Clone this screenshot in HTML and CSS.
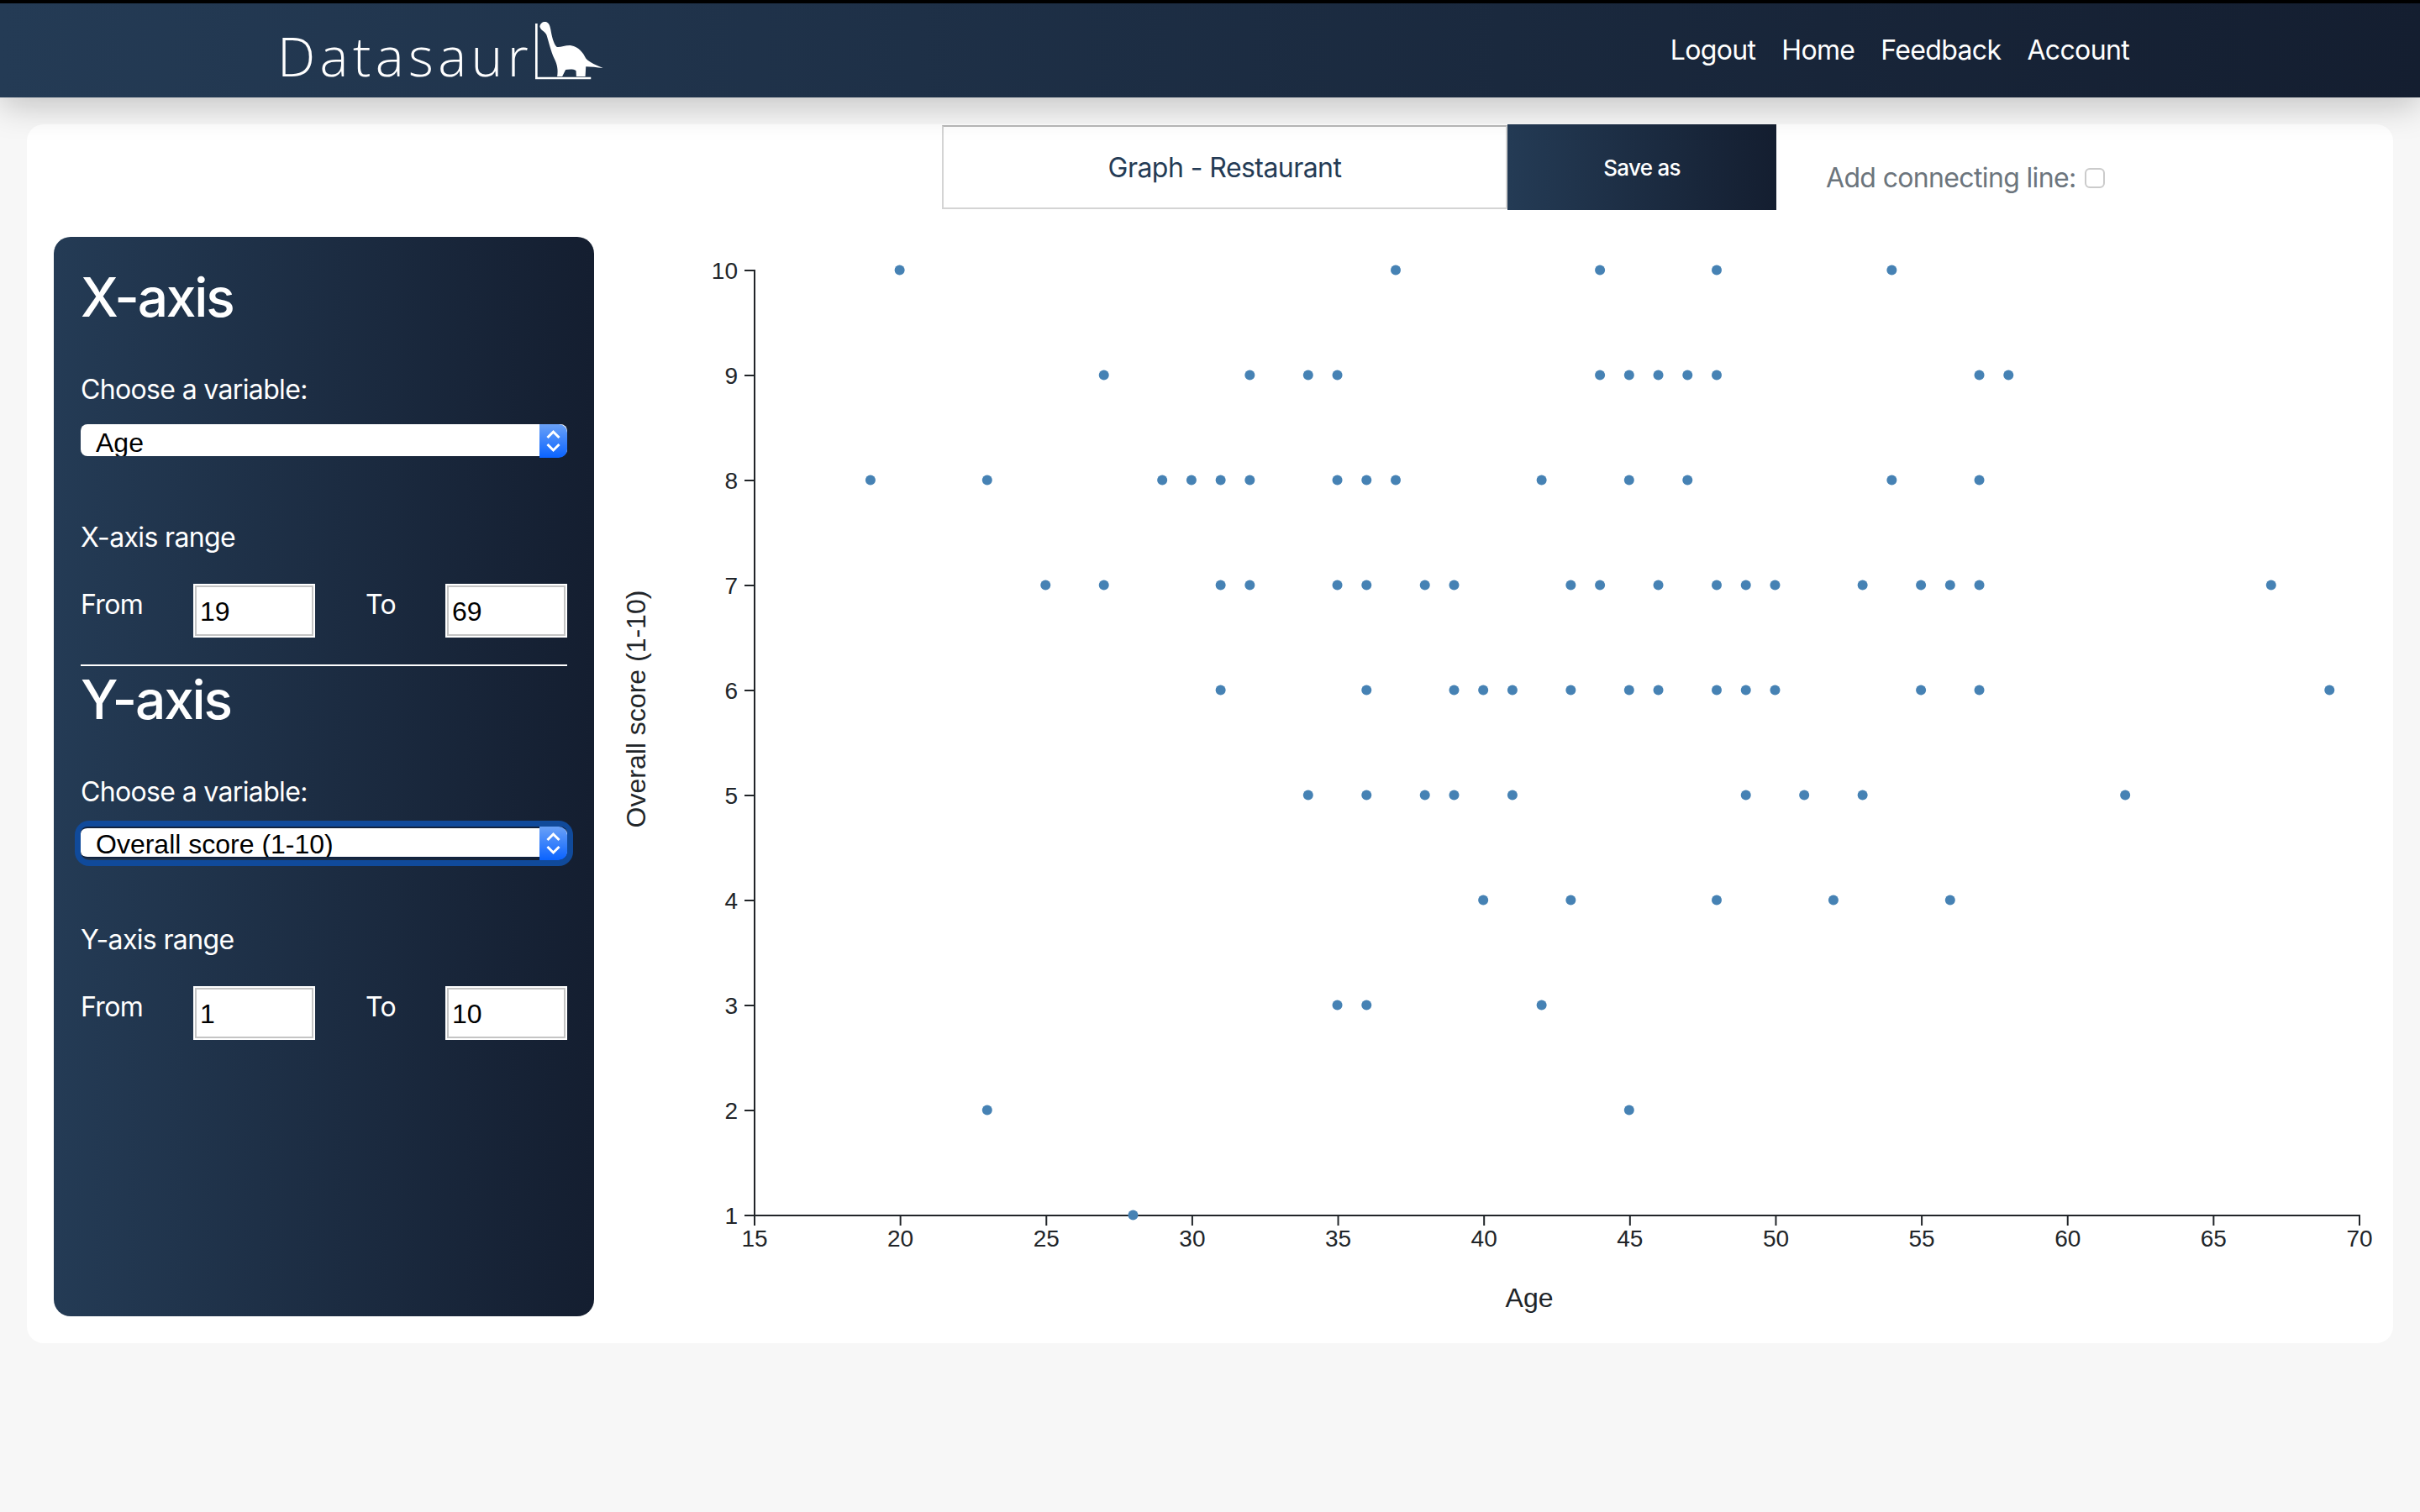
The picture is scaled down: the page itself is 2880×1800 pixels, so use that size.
FILE: index.html
```html
<!doctype html>
<html lang="en">
<head>
  <meta charset="utf-8" />
  <title>Datasaur</title>
  <link rel="stylesheet" href="styles.css">
</head>
<body>
  <nav class="navbar">
    <a class="brand" href="#">
      <span class="brand-name">Datasaur</span>
      <svg class="brand-logo" viewBox="952 28 245 212" aria-hidden="true">
        <path class="brand-frame" d="M952 40h8v190h190v8H952z" />
        <path class="brand-dino" d="M968 50C970 38 980 32 990 34C1000 37 1004 46 1007 62C1011 85 1016 108 1028 123C1040 126 1060 116 1080 118C1105 122 1122 142 1132 164C1146 180 1170 188 1193 198C1170 196 1150 193 1132 193L1130 228H1098L1097 208C1085 200 1070 204 1060 204L1048 228H1030C1034 205 1030 185 1020 165C1008 140 1000 105 992 80C988 68 970 64 968 50z" />
      </svg>
    </a>
    <div class="nav-links">
      <a href="#">Logout</a>
      <a href="#">Home</a>
      <a href="#">Feedback</a>
      <a href="#">Account</a>
    </div>
  </nav>

  <main class="card">
    <div class="graph-bar">
      <input class="graph-title" type="text" value="Graph - Restaurant" />
      <button class="save-btn">Save as</button>
      <label class="line-toggle">Add connecting line:
        <input type="checkbox" />
      </label>
    </div>

    <div class="workspace">
      <aside class="panel">
        <section class="axis-group">
          <h2>X-axis</h2>
          <label class="field-label">Choose a variable:</label>
          <div class="select-wrap">
            <select><option>Age</option></select>
            <span class="select-arrow">
              <svg viewBox="0 0 33 40" aria-hidden="true"><path d="M9.5 16l7-7 7 7M9.5 24l7 7 7-7" /></svg>
            </span>
          </div>
          <div class="field-label range-label">X-axis range</div>
          <div class="range-row">
            <label>From</label>
            <input type="text" value="19" />
            <span></span>
            <label>To</label>
            <input type="text" value="69" />
          </div>
        </section>

        <hr />

        <section class="axis-group">
          <h2>Y-axis</h2>
          <label class="field-label">Choose a variable:</label>
          <div class="select-wrap is-focused">
            <select><option>Overall score (1-10)</option></select>
            <span class="select-arrow">
              <svg viewBox="0 0 33 40" aria-hidden="true"><path d="M9.5 16l7-7 7 7M9.5 24l7 7 7-7" /></svg>
            </span>
          </div>
          <div class="field-label range-label">Y-axis range</div>
          <div class="range-row">
            <label>From</label>
            <input type="text" value="1" />
            <span></span>
            <label>To</label>
            <input type="text" value="10" />
          </div>
        </section>
      </aside>

      <svg id="chart" class="chart"></svg>
    </div>
  </main>

  <script src="chart.js"></script>
</body>
</html>
```

FILE: styles.css
```css
:root{
  --grad:linear-gradient(to right,#243b55,#141e30);
  --ui-font:Inter,"Noto Sans",sans-serif;
  --form-font:"Liberation Sans",Arial,sans-serif;
}

/* ---- page ---- */
body{
  margin:0;
  min-height:1800px;
  background:#f7f7f7;
  font-family:var(--ui-font);
  font-size:32px;
  letter-spacing:-.65px;
  color:#212529;
}

/* ---- navbar ---- */
.navbar{
  position:relative;
  z-index:1;
  display:flex;
  align-items:center;
  justify-content:space-between;
  box-sizing:border-box;
  height:116px;
  padding:0 346px 0 330px;
  border-top:4px solid #000;
  background:var(--grad);
  box-shadow:0 10px 40px rgba(0,0,0,.22);
}
.brand{
  display:flex;
  align-items:flex-end;
  color:#fff;
  text-decoration:none;
}
.brand-name{
  margin-top:14px;
  font-family:"Open Sans",sans-serif;
  font-weight:300;
  font-size:64px;
  line-height:84px;
  letter-spacing:5.4px;
}
.brand-logo{
  width:82px;
  height:71px;
  margin:0 0 14px 3px;
}
.brand-frame,.brand-dino{ fill:#fff; }
.nav-links{
  display:flex;
  gap:31px;
}
.nav-links a{
  color:#fff;
  text-decoration:none;
  line-height:48px;
}

/* ---- card ---- */
.card{
  margin:32px 32px 0;
  padding:0 0 32px 32px;
  background:#fff;
  border-radius:20px;
}
.graph-bar{
  display:flex;
  align-items:center;
  height:102px;
  margin-bottom:32px;
  padding-left:1057px;
}
.graph-title{
  box-sizing:border-box;
  width:673px;
  height:100px;
  border:2px solid #d4d4d4;
  border-top-color:#b8b8b8;
  background:#fff;
  font-family:var(--ui-font);
  font-size:32px;
  letter-spacing:-.55px;
  text-align:center;
  color:#243b55;
}
.save-btn{
  width:320px;
  height:102px;
  border:none;
  background:var(--grad);
  font-family:var(--ui-font);
  font-size:26px;
  font-weight:500;
  letter-spacing:-.7px;
  color:#fff;
}
.line-toggle{
  display:flex;
  align-items:center;
  gap:10px;
  margin:26px 0 0 59px;
  color:#6c757d;
  line-height:48px;
}
.line-toggle input{
  appearance:none;
  box-sizing:border-box;
  width:24px;
  height:24px;
  margin:0;
  border:2px solid #cbcbcb;
  border-radius:6px;
  background:#fff;
}
.workspace{
  display:flex;
}

/* ---- axis panel ---- */
.panel{
  box-sizing:border-box;
  width:643px;
  height:1285px;
  padding:32px;
  background:var(--grad);
  border-radius:20px;
  color:#fff;
}
.panel h2{
  margin:0 0 46px;
  font-size:64px;
  font-weight:500;
  line-height:80px;
  letter-spacing:-2.2px;
}
.panel hr{
  height:2px;
  margin:32px 0 0;
  border:none;
  background:#fff;
}
.field-label{
  display:block;
  margin-bottom:17px;
  line-height:48px;
}
.range-label{
  margin:71px 0 31px;
}

/* native-looking select */
.select-wrap{
  position:relative;
  height:40px;
  border-radius:10px;
}
.select-wrap.is-focused{
  box-shadow:0 0 0 7px #104a9b;
}
.select-wrap select{
  appearance:none;
  display:block;
  box-sizing:border-box;
  width:100%;
  height:38px;
  margin:1px 0;
  padding:4px 40px 0 18px;
  border:none;
  border-radius:8px;
  background:#fff;
  font-family:var(--form-font);
  font-size:32px;
  color:#000;
}
.select-wrap.is-focused select{
  padding-top:1px;
  border-top:2px solid #10223f;
  border-bottom:2px solid #10223f;
}
.select-arrow{
  position:absolute;
  top:0;
  right:0;
  width:33px;
  height:40px;
  border-radius:0 10px 10px 0;
  background:linear-gradient(to bottom,#6aa1f7,#0a63ff);
}
.select-arrow svg{
  display:block;
  width:33px;
  height:40px;
}
.select-arrow path{
  fill:none;
  stroke:#fff;
  stroke-width:3;
}

/* from / to row */
.range-row{
  display:grid;
  grid-template-columns:134px 145px 60px 95px 145px;
  height:64px;
}
.range-row label{
  margin-top:1px;
  line-height:48px;
}
.range-row input{
  box-sizing:border-box;
  width:145px;
  height:64px;
  padding:3px 0 0 6px;
  border:2px solid #fff;
  box-shadow:inset 0 0 0 2px #c4c4c4;
  background:#fff;
  font-family:var(--form-font);
  font-size:32px;
  color:#000;
}
.range-row input:focus{ outline:none; }

/* ---- chart ---- */
.chart{
  flex:1;
  height:1285px;
  font-family:var(--form-font);
  letter-spacing:normal;
  fill:#212529;
}
.chart .axis-line{
  stroke:#212529;
  stroke-width:2;
}
.chart .tick-label{ font-size:28px; }
.chart .axis-title{ font-size:32px; }
.chart .dot{ fill:#4682b4; }
```

FILE: chart.js
```js
// restaurant survey: rows of age values by overall score
var data = {
  10: [20, 37, 44, 48, 54],
  9: [27, 32, 34, 35, 44, 45, 46, 47, 48, 57, 58],
  8: [19, 23, 29, 30, 31, 32, 35, 36, 37, 42, 45, 47, 54, 57],
  7: [25, 27, 31, 32, 35, 36, 38, 39, 43, 44, 46, 48, 49, 50, 53, 55, 56, 57, 67],
  6: [31, 36, 39, 40, 41, 43, 45, 46, 48, 49, 50, 55, 57, 69],
  5: [34, 36, 38, 39, 41, 49, 51, 53, 62],
  4: [40, 43, 48, 52, 56],
  3: [35, 36, 42],
  2: [23, 45],
  1: [28]
};

var svg = document.getElementById("chart");
var NS = "http://www.w3.org/2000/svg";

var left = 191, bottom = 1165, top_ = 40, right = 2101;

function x(v) { return left + (v - 15) * (right - left) / 55; }
function y(v) { return bottom - (v - 1) * (bottom - top_) / 9; }

function add(tag, attrs, text) {
  var el = document.createElementNS(NS, tag);
  for (var k in attrs) el.setAttribute(k, attrs[k]);
  if (text !== undefined) el.textContent = text;
  svg.appendChild(el);
  return el;
}

// axes
add("line", { class: "axis-line", x1: left, x2: left, y1: top_ - 1, y2: bottom + 12 });
add("line", { class: "axis-line", x1: left - 12, x2: right + 1, y1: bottom, y2: bottom });

for (var i = 15; i <= 70; i += 5) {
  add("line", { class: "axis-line", x1: x(i), x2: x(i), y1: bottom, y2: bottom + 12 });
  add("text", { class: "tick-label", x: x(i), y: bottom + 37, "text-anchor": "middle" }, i);
}
for (var j = 1; j <= 10; j++) {
  add("line", { class: "axis-line", x1: left - 12, x2: left, y1: y(j), y2: y(j) });
  add("text", { class: "tick-label", x: left - 20, y: y(j) + 10, "text-anchor": "end" }, j);
}

add("text", { class: "axis-title", x: 1113, y: 1274, "text-anchor": "middle" }, "Age");
add("text", {
  class: "axis-title",
  "text-anchor": "middle",
  transform: "translate(61,562) rotate(-90)"
}, "Overall score (1-10)");

// points
Object.keys(data).forEach(function (score) {
  data[score].forEach(function (age) {
    add("circle", { class: "dot", cx: x(age) - 1, cy: y(+score) - 0.5, r: 6 });
  });
});
```
